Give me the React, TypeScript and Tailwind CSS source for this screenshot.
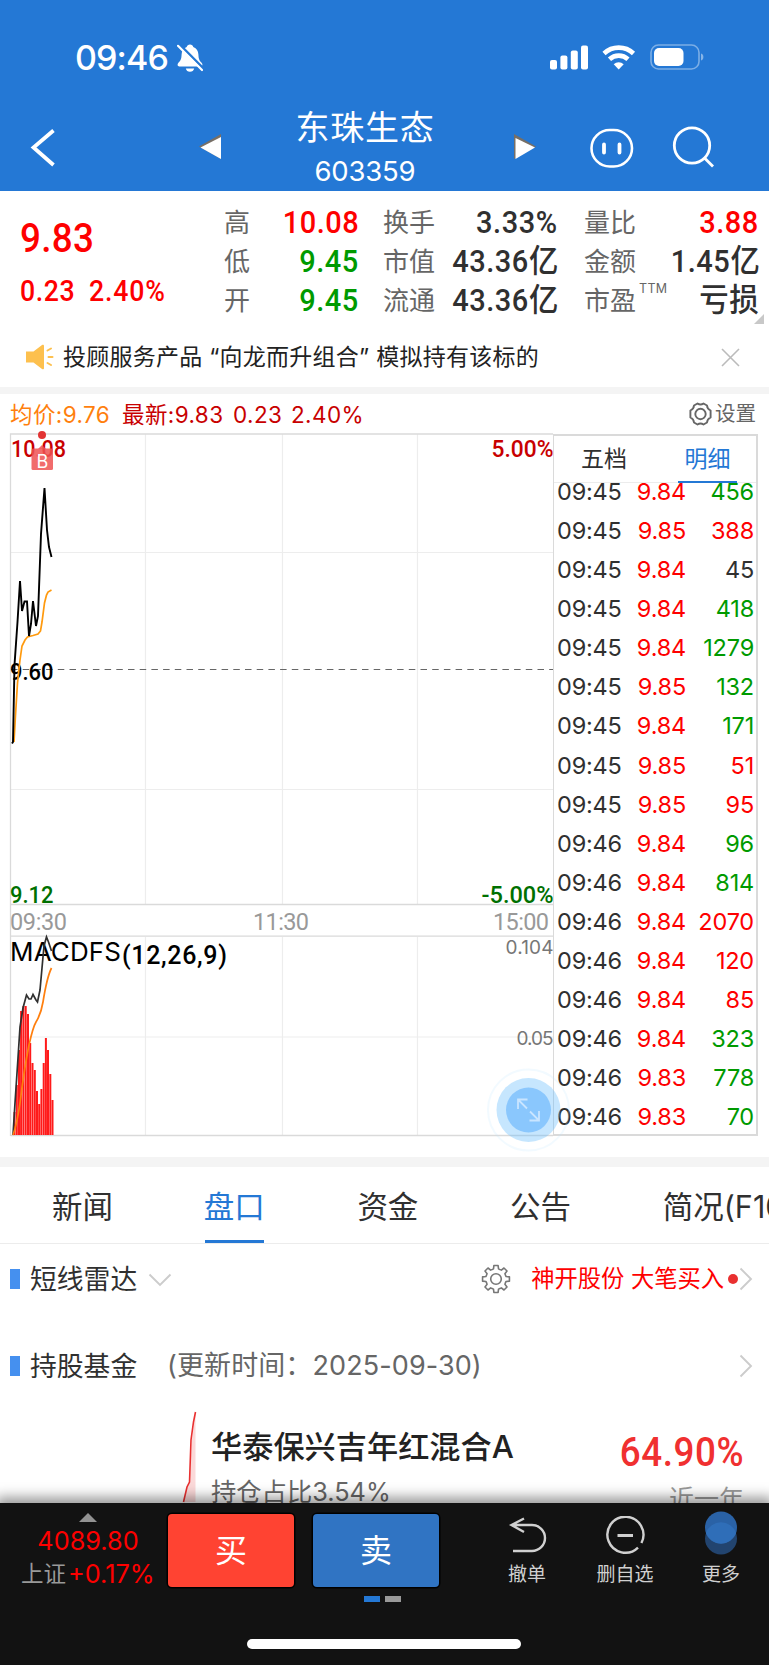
import React from 'react';

const RED = 'text-[#fe0000]';
const GREEN = 'text-[#009a00]';
const DARK = 'text-[#303030]';

function Digits({ children, className = '' }: { children: React.ReactNode; className?: string }) {
  return (
    <span className={`inline-block whitespace-nowrap font-['Roboto','Noto_Sans_CJK_SC',sans-serif] ${className}`}>{children}</span>
  );
}

function StatusBar() {
  return (
    <div className="flex h-[100px] items-start justify-between pt-[38px] pr-[65px] pl-[75px]">
      <div className="flex h-[40px] items-center">
        <span className="w-[102px] text-[34px] leading-[40px] font-medium tracking-[-0.900px]">09:46</span>
        <svg width="26" height="28" viewBox="0 0 26 28">
          <path
            d="M13 0.5c-1.7 0-3 1-3.300 2.500C6.300 4.200 4.800 7 4.600 10.500 4.400 15 3.600 16.600 1.400 18.800 0 20.300.4 22.500 2.200 22.500h21.600c1.800 0 2.200-2.200.8-3.700-2.200-2.200-3-3.800-3.200-8.300C21.200 7 19.700 4.200 16.300 3 16 1.500 14.700.5 13 .5z"
            fill="#fff"
          />
          <path d="M8.800 24.500h8.400c-.4 2-2 3.300-4.200 3.300s-3.800-1.300-4.200-3.300z" fill="#fff" />
          <path d="M2.500 0.500L27 25" stroke="#2478d5" strokeWidth="2.600" />
          <path d="M1 1.800L25 26" stroke="#fff" strokeWidth="2.200" strokeLinecap="round" />
        </svg>
      </div>
      <div className="flex h-[38px] items-center">
        <svg width="38" height="25" viewBox="0 0 38 25" fill="#fff">
          <rect x="0" y="15" width="7" height="9.500" rx="2" />
          <rect x="10.400" y="10.500" width="7" height="14" rx="2" />
          <rect x="20.800" y="5.500" width="7" height="19" rx="2" />
          <rect x="31" y="0.500" width="7" height="24" rx="2" />
        </svg>
        <svg className="ml-[14px]" width="34" height="25" viewBox="0 0 34 25" fill="none" stroke="#fff">
          <path d="M2 8.500a21.500 21.500 0 0 1 29.500 0" strokeWidth="4.600" />
          <path d="M7.500 14.300a13.500 13.500 0 0 1 18.500 0" strokeWidth="4.600" />
          <path d="M16.700 24.500l-5-5.200a7.400 7.400 0 0 1 10 0z" fill="#fff" stroke="none" />
        </svg>
        <svg className="ml-[14px]" width="54" height="26" viewBox="0 0 54 26">
          <rect x="1" y="1" width="48" height="24" rx="7.500" fill="none" stroke="#fff" strokeOpacity="0.400" strokeWidth="1.600" />
          <rect x="4" y="4" width="29.500" height="18" rx="5" fill="#fff" />
          <path d="M51 9.500c3.200.8 3.200 6.200 0 7z" fill="#fff" fillOpacity="0.450" />
        </svg>
      </div>
    </div>
  );
}

function NavBar() {
  return (
    <div className="flex h-[91px] items-start pl-[29px]">
      <svg className="mt-[27px]" width="28" height="42" viewBox="0 0 28 42" fill="none" stroke="#fff" strokeWidth="3.800">
        <path d="M24.500 3.500L4.500 20.500L24.500 38" />
      </svg>
      <svg className="mt-[33px] ml-[140px]" width="26" height="27" viewBox="0 0 26 27">
        <path d="M2 13.500L24 1v25z" fill="#776f66" />
        <path d="M3.500 14.500L24 4v22z" fill="#fff" />
      </svg>
      <div className="flex w-[284px] flex-col items-center">
        <div className="mt-[7px] h-[42px] text-[34px] leading-[42px] tracking-[0.700px]">东珠生态</div>
        <div className="mt-[7px] h-[30px] text-[27.500px] leading-[30px] tracking-[-0.200px]">603359</div>
      </div>
      <svg className="mt-[33px] ml-[5px]" width="26" height="27" viewBox="0 0 26 27">
        <path d="M2 1v25l22-12.500z" fill="#776f66" />
        <path d="M3.500 5v21l19.500-11.500z" fill="#fff" />
      </svg>
      <svg className="mt-[26px] ml-[50px]" width="46" height="44" viewBox="0 0 46 44" fill="none" stroke="#fff">
        <rect x="3.500" y="4" width="40.500" height="36.500" rx="18.250" strokeWidth="2.600" />
        <path d="M16 18.500v8M31.500 18.500v8" strokeWidth="3.800" strokeLinecap="round" />
      </svg>
      <svg className="mt-[25px] ml-[38px]" width="44" height="44" viewBox="0 0 44 44" fill="none" stroke="#fff" strokeWidth="2.800">
        <circle cx="20" cy="20.500" r="17.700" />
        <path d="M32 32.500l9 9" />
      </svg>
    </div>
  );
}

function StatColumn({
  rows,
  className,
}: {
  rows: { label: React.ReactNode; value: React.ReactNode; color: string }[];
  className: string;
}) {
  return (
    <div className={`flex flex-col ${className}`}>
      {rows.map((r, i) => (
        <div key={i} className="flex h-[39px] items-center justify-between">
          <span className="text-[26px] leading-[39px] whitespace-nowrap text-[#666]">{r.label}</span>
          <Digits className={`origin-right scale-x-[0.92] text-[31.500px] leading-[39px] font-medium tracking-[0.600px] ${r.color}`}>
            {r.value}
          </Digits>
        </div>
      ))}
    </div>
  );
}

function Quote() {
  const yi = (n: string) => (
    <>
      {n}
      <span className="text-[32px] tracking-[-0.500px]">亿</span>
    </>
  );
  return (
    <div className="flex h-[135px] pt-[12px]">
      <div className="flex w-[224px] flex-col pl-[20px]">
        <Digits
          className={`mt-[13px] h-[46px] origin-left scale-x-[0.92] text-[40px] leading-[46px] font-medium tracking-[0.300px] ${RED}`}
        >
          9.83
        </Digits>
        <div className={`mt-[12px] flex h-[34px] ${RED}`}>
          <Digits className="w-[69px] origin-left scale-x-[0.92] text-[29px] leading-[34px] font-medium tracking-[0.600px]">0.23</Digits>
          <Digits className="origin-left scale-x-[0.92] text-[29px] leading-[34px] font-medium tracking-[0.900px]">2.40%</Digits>
        </div>
      </div>
      <StatColumn
        className="w-[135px]"
        rows={[
          { label: '高', value: '10.08', color: RED },
          { label: '低', value: '9.45', color: GREEN },
          { label: '开', value: '9.45', color: GREEN },
        ]}
      />
      <StatColumn
        className="ml-[24px] w-[175px]"
        rows={[
          { label: '换手', value: '3.33%', color: DARK },
          { label: '市值', value: yi('43.36'), color: DARK },
          { label: '流通', value: yi('43.36'), color: DARK },
        ]}
      />
      <StatColumn
        className="ml-[26px] w-[175px]"
        rows={[
          { label: '量比', value: '3.88', color: RED },
          { label: '金额', value: yi('1.45'), color: DARK },
          {
            label: (
              <span className="flex">
                市盈<span className="-mt-[12px] ml-[3px] text-[12.500px] tracking-[0.300px]">TTM</span>
              </span>
            ),
            value: <span className="text-[32px]">亏损</span>,
            color: DARK,
          },
        ]}
      />
      <svg className="mt-[110px] -ml-[6px]" width="12" height="12" viewBox="0 0 12 12">
        <path d="M11 1v10H1z" fill="#c8c8c8" />
      </svg>
    </div>
  );
}

function Notice() {
  return (
    <div className="flex h-[61px] items-center pl-[25px]">
      <svg className="mt-[1px]" width="30" height="28" viewBox="0 0 30 28">
        <path d="M1 8.500h7.500L17 2c1-.7 2-.3 2 .8v22.400c0 1.100-1 1.500-2 .8l-8.500-6.500H1z" fill="#fdc04e" />
        <path d="M22.500 7.500l3.500-2M23.500 14h4M22.500 20l3.500 2" stroke="#fdc04e" strokeWidth="2" strokeLinecap="round" />
      </svg>
      <span className="mt-[1px] ml-[8px] w-[654px] text-[23px] leading-[36px] tracking-[0.250px] text-[#222]">
        投顾服务产品 “向龙而升组合” 模拟持有该标的
      </span>
      <svg className="mt-[1px] ml-[4px]" width="19" height="19" viewBox="0 0 19 19" stroke="#bbb" strokeWidth="1.600">
        <path d="M1 1l17 17M18 1L1 18" />
      </svg>
    </div>
  );
}

function Legend() {
  return (
    <div className="flex h-[39px] items-center pt-[2px] pl-[10px] text-[22.500px] leading-[37px] tracking-[0.400px] whitespace-nowrap text-[#c80000]">
      <span className="w-[112px] text-[#ff7f0e]">均价:9.76</span>
      <span className="w-[111px]">最新:9.83</span>
      <span className="w-[58px]">0.23</span>
      <span className="w-[397px]">2.40%</span>
      <svg className="-mt-[2px]" width="25" height="24" viewBox="0 0 25 24" fill="none" stroke="#666" strokeWidth="1.900">
        <path
          d="M9.500 1.500Q12.500 3.500 15.500 1.500L19 3.500Q19.200 7 22.600 8.500V15.500Q19.200 17 19 20.500L15.500 22.500Q12.500 20.500 9.500 22.500L6 20.500Q5.800 17 2.400 15.500V8.500Q5.800 7 6 3.500Z"
          strokeLinejoin="round"
        />
        <circle cx="12.500" cy="12" r="5.200" />
      </svg>
      <span className="-mt-[2px] ml-[2px] text-[20.500px] tracking-normal text-[#666]">设置</span>
    </div>
  );
}

const BARS: [number, number][] = [
  [13.500, 1112], [15.800, 1085], [18, 1050], [20.100, 1011], [22.400, 1006], [24.700, 1006], [27, 1014], [29.200, 1043],
  [31.500, 1063], [33.800, 1070], [36, 1091], [38.200, 1104], [40.400, 1089], [42.700, 1063], [44.900, 1038],
  [47, 1050], [49.300, 1074], [51.500, 1100],
];

function Charts() {
  return (
    <svg width="553" height="724" viewBox="0 433 553 724" className="shrink-0 overflow-visible">
      <g stroke="#ededed" strokeWidth="1.200" fill="none">
        <path d="M145.500 434V904M282.500 434V904M417.500 434V904M145.500 937V1136M282.500 937V1136M417.500 937V1136" />
        <path d="M11 552.500H553M11 789.500H553M11 1037H553" />
      </g>
      <g stroke="#dadada" strokeWidth="1.300" fill="none">
        <path d="M10.500 1136V434H553M10.500 904.500H553M10.500 936.200H553M10.500 1135.500H553" />
      </g>
      <path d="M11 669.500H553" stroke="#666" strokeWidth="1.200" strokeDasharray="6.500 5.200" fill="none" />

      <g fontFamily="Roboto, sans-serif" fontWeight="500" fontSize="23.500">
        <text x="11" y="456.500" fill="#c80000" textLength="55" lengthAdjust="spacingAndGlyphs">10.08</text>
        <text x="553.500" y="456.500" fill="#c80000" textAnchor="end" textLength="62" lengthAdjust="spacingAndGlyphs">5.00%</text>
        <text x="10" y="680" fill="#000" textLength="43.500" lengthAdjust="spacingAndGlyphs">9.60</text>
        <text x="10" y="903" fill="#007000" textLength="43.500" lengthAdjust="spacingAndGlyphs">9.12</text>
        <text x="553.500" y="903" fill="#007000" textAnchor="end" textLength="72" lengthAdjust="spacingAndGlyphs">-5.00%</text>
        <g fill="#999" fontWeight="400">
          <text x="10" y="930" textLength="57">09:30</text>
          <text x="253" y="930" textLength="56">11:30</text>
          <text x="493" y="930" textLength="56">15:00</text>
        </g>
        <text x="122" y="963.500" fontSize="25" textLength="105">(12,26,9)</text>
      </g>
      <g fontFamily="Inter, sans-serif">
        <text x="10" y="961" fontSize="26" fill="#000" textLength="111">MACDFS</text>
        <text x="553.500" y="954" fontSize="19" fill="#777" textAnchor="end" textLength="48">0.104</text>
        <text x="553.500" y="1045" fontSize="19" fill="#777" textAnchor="end" textLength="37">0.05</text>
      </g>

      <path
        d="M14 742L15.500 715L17.500 683L20 660L22 646L25 640L27.500 637L33 635.500L38 634L40.500 631L42 622L44.500 603L46.500 595L48 592L51.500 590"
        stroke="#ff9a0e" strokeWidth="1.700" fill="none"
      />
      <path
        d="M12 743.500L13 742L14.500 665L17.500 622L20 581L22 611L24.500 601.500H27L29 636L31 624L33 601L36 626L38 616L41 534L44.500 488L47 530L49 547L51.500 557"
        stroke="#000" strokeWidth="1.900" fill="none"
      />

      <rect x="31.500" y="448.500" width="21.500" height="21.500" rx="1.500" fill="#ee5252" fillOpacity="0.850" />
      <path d="M38 449l4-4 4 4z" fill="#ee5252" fillOpacity="0.850" />
      <text x="42.300" y="467.500" fill="#fff" fontSize="18" fontFamily="Inter, sans-serif" textAnchor="middle">B</text>
      <circle cx="42" cy="435" r="4" fill="#e23434" />

      {BARS.map(([x, y]) => (
        <rect key={x} x={x} y={y} width="2" height={1135 - y} fill="#ff1a1a" />
      ))}
      <path
        d="M13 1135L15 1103L18 1058L20 1027L23 1008L26.500 995L29 999L31 999L33 994.500L36 1000L37.500 1002L40 990L42 968L44 946L46.500 937L48.500 942L51.500 951"
        stroke="#303030" strokeWidth="1.700" fill="none"
      />
      <path
        d="M13 1135Q17 1124 20 1103Q24 1070 29 1045Q33 1027 36 1022Q41 1014 43 1002Q47 977 51.500 968"
        stroke="#ff7f0e" strokeWidth="1.700" fill="none"
      />
    </svg>
  );
}

const TRADES: [string, string, string, string][] = [
  ['09:45', '9.84', '456', GREEN],
  ['09:45', '9.85', '388', RED],
  ['09:45', '9.84', '45', DARK],
  ['09:45', '9.84', '418', GREEN],
  ['09:45', '9.84', '1279', GREEN],
  ['09:45', '9.85', '132', GREEN],
  ['09:45', '9.84', '171', GREEN],
  ['09:45', '9.85', '51', RED],
  ['09:45', '9.85', '95', RED],
  ['09:46', '9.84', '96', GREEN],
  ['09:46', '9.84', '814', GREEN],
  ['09:46', '9.84', '2070', RED],
  ['09:46', '9.84', '120', RED],
  ['09:46', '9.84', '85', RED],
  ['09:46', '9.84', '323', GREEN],
  ['09:46', '9.83', '778', GREEN],
  ['09:46', '9.83', '70', GREEN],
];

function TradePanel() {
  return (
    <div className="mt-[1px] flex h-[702px] w-[205px] shrink-0 flex-col border-t-2 border-r-2 border-b-2 border-l border-[#dadada]">
      <div className="flex h-[47px] border-b border-[#ececec]">
        <span className="w-[124px] pl-[27px] text-[23px] leading-[47px] text-[#303030]">五档</span>
        <span className="-mb-px flex w-[59px] justify-center border-b-2 border-[#2478d5] text-[23px] leading-[47px] text-[#2478d5]">
          明细
        </span>
      </div>
      <div className="flex flex-1 flex-col overflow-hidden text-[23.500px] leading-[39px] tracking-[-0.200px]">
        {TRADES.map(([time, price, volume, color], i) => (
          <div key={i} className={`flex h-[39.080px] shrink-0 pr-[2px] pl-[3px] ${i === 0 ? '-mt-[11px]' : ''}`}>
            <span className="w-[64px] text-[#303030]">{time}</span>
            <span className={`w-[65px] text-right ${RED}`}>{price}</span>
            <span className={`flex-1 text-right ${color}`}>{volume}</span>
          </div>
        ))}
      </div>
    </div>
  );
}

function Market() {
  return (
    <div className="relative flex h-[724px]">
      <Charts />
      <TradePanel />
      <svg className="absolute top-[635px] left-[486px]" width="84" height="84" viewBox="0 0 84 84">
        <circle cx="42.500" cy="42" r="40.500" fill="none" stroke="#bfe4ff" strokeOpacity="0.200" strokeWidth="2" />
        <circle cx="42.500" cy="42" r="32" fill="#5cb6fb" fillOpacity="0.350" />
        <circle cx="42.500" cy="42" r="22.500" fill="#7fc1fd" fillOpacity="0.850" />
        <g stroke="#c9e5ff" strokeWidth="1.800" fill="none">
          <path d="M32 41V31.500H41.500M32 31.500L41 40.500M53 43V52.500H43.500M53 52.500L44 43.500" />
        </g>
      </svg>
    </div>
  );
}

function Tabs() {
  const tabs = ['新闻', '盘口', '资金', '公告', '简况(F10)'];
  return (
    <div className="flex h-[77px] overflow-hidden border-b border-[#ececec] pl-[52px] text-[30.500px] leading-[79px] whitespace-nowrap text-[#303030]">
      {tabs.map((t, i) => (
        <div key={t} className="w-[152.700px] shrink-0">
          {i === 1 ? (
            <span className="flex h-[77px] w-[59px] justify-center border-b-4 border-[#2478d5] text-[#2478d5]">{t}</span>
          ) : (
            t
          )}
        </div>
      ))}
    </div>
  );
}

function ChevronRight() {
  return (
    <svg width="14" height="24" viewBox="0 0 14 24" fill="none" stroke="#ccc" strokeWidth="1.900">
      <path d="M1.500 1.500L12 12L1.500 22.500" />
    </svg>
  );
}

const GEAR = Array.from({ length: 8 }, (_, i) => {
  const at = (deg: number, r: number) => {
    const a = ((i * 45 + deg) * Math.PI) / 180;
    return `${(15 + r * Math.sin(a)).toFixed(2)} ${(15 - r * Math.cos(a)).toFixed(2)}`;
  };
  return `${i === 0 ? 'M' : 'L'}${at(-14, 10.4)}L${at(-9, 13.6)}L${at(9, 13.6)}L${at(14, 10.4)}A10.4 10.4 0 0 0 ${at(31, 10.4)}`;
}).join('');

function RadarRow() {
  return (
    <div className="flex h-[70px] items-center pl-[10px]">
      <span className="h-[20px] w-[10px] bg-[#4590ef]" />
      <span className="ml-[10px] text-[26.800px] leading-[40px] text-[#303030]">短线雷达</span>
      <svg className="mt-[1px] ml-[11px]" width="24" height="14" viewBox="0 0 24 14" fill="none" stroke="#ccc" strokeWidth="1.900">
        <path d="M1.500 1.500L12 12L22.500 1.500" />
      </svg>
      <svg className="ml-[309px]" width="30" height="30" viewBox="0 0 30 30" fill="none" stroke="#777" strokeWidth="1.600">
        <path d={GEAR + 'Z'} strokeLinejoin="round" />
        <circle cx="15" cy="15" r="5.300" />
      </svg>
      <span className="ml-[20px] w-[197px] text-[23.300px] leading-[40px] whitespace-nowrap text-[#fe0000]">神开股份 大笔买入</span>
      <span className="h-[10px] w-[10px] rounded-full bg-[#e93030]" />
      <span className="ml-[1px]">
        <ChevronRight />
      </span>
    </div>
  );
}

function FundRow() {
  return (
    <div className="flex h-[95px] items-center pt-[9px] pl-[10px]">
      <span className="h-[20px] w-[10px] bg-[#4590ef]" />
      <span className="ml-[10px] w-[137px] text-[26.800px] leading-[40px] text-[#303030]">持股基金</span>
      <span className="w-[572px] text-[27px] leading-[40px] tracking-[0.100px] text-[#666]">(更新时间：2025-09-30)</span>
      <ChevronRight />
    </div>
  );
}

function FundItem() {
  return (
    <div className="flex h-[94px] overflow-hidden pl-[180px]">
      <svg width="20" height="94" viewBox="0 1409 20 94" className="shrink-0">
        <path d="M15.500 1412L12 1440L9.500 1482L7 1486L3.500 1502H15.500z" fill="#fbd9d9" />
        <path d="M15.500 1412L13.500 1422L11 1440L9.500 1482L7 1487L3.500 1502" stroke="#e93030" strokeWidth="1.600" fill="none" />
      </svg>
      <div className="ml-[11px] flex w-[391px] flex-col whitespace-nowrap">
        <span className="mt-[18px] text-[31.200px] leading-[40px] font-medium text-[#222]">华泰保兴吉年红混合A</span>
        <span className="mt-[7px] text-[25.300px] leading-[36px] text-[#666]">持仓占比3.54%</span>
      </div>
      <div className="flex w-[142px] flex-col items-end whitespace-nowrap">
        <Digits className="mt-[24px] origin-right scale-x-[0.92] text-[40px] leading-[40px] font-medium tracking-[0.600px] text-[#f03030]">
          64.90%
        </Digits>
        <span className="mt-[8px] text-[25px] leading-[36px] text-[#999]">近一年</span>
      </div>
    </div>
  );
}

function ToolLabel({ children }: { children: React.ReactNode }) {
  return <span className="mt-[7px] text-[19px] leading-[24px] whitespace-nowrap text-[#d0d0d0]">{children}</span>;
}

function BottomBar() {
  return (
    <div className="relative flex h-[162px] flex-col bg-[#121212] shadow-[0_-2px_12px_4px_rgba(0,0,0,0.4)]">
      <div className="flex h-[91px] shrink-0">
        <div className="flex w-[168px] flex-col text-[#fe0000]">
          <div className="flex flex-col items-center pl-[8px]">
            <svg className="mt-[10px]" width="18" height="9" viewBox="0 0 18 9">
              <path d="M9 0l9 9H0z" fill="#929292" />
            </svg>
            <span className="mt-[4px] text-[25.300px] leading-[30px]">4089.80</span>
          </div>
          <div className="mt-[2px] flex pl-[21px] leading-[32px] whitespace-nowrap">
            <span className="w-[47px] text-[22.500px] text-[#999]">上证</span>
            <span className="text-[25.300px]">+0.17%</span>
          </div>
        </div>
        <button className="mt-[11px] h-[73px] w-[126px] rounded-[4px] bg-[#ff4332] text-[32px] leading-[73px] text-white shadow-[0_0_0_1.500px_#000]">
          买
        </button>
        <button className="mt-[11px] ml-[19px] h-[73px] w-[126px] rounded-[4px] bg-[#3074c3] text-[32px] leading-[73px] text-white shadow-[0_0_0_1.500px_#000]">
          卖
        </button>
        <div className="ml-[47px] flex w-[82px] flex-col items-center">
          <svg className="mt-[13px]" width="40" height="40" viewBox="0 0 40 40" fill="none" stroke="#d0d0d0" strokeWidth="2.400">
            <path d="M5 9H25A13 13 0 0 1 25 35H6M17 2.500L4.500 9L17 16" />
          </svg>
          <ToolLabel>撤单</ToolLabel>
        </div>
        <div className="ml-[16px] flex w-[82px] flex-col items-center">
          <svg className="mt-[13px]" width="40" height="40" viewBox="0 0 40 40" fill="none" stroke="#d0d0d0" strokeWidth="2.400">
            <path d="M36.400 27A18 18 0 1 0 33 31.600" />
            <path d="M12.500 19.500h15.500" strokeWidth="3" />
          </svg>
          <ToolLabel>删自选</ToolLabel>
        </div>
        <div className="ml-[14px] flex w-[82px] flex-col items-center">
          <svg className="mt-[8px]" width="32" height="45" viewBox="0 0 32 45">
            <circle cx="16" cy="27.500" r="16" fill="#22446f" />
            <circle cx="16" cy="16.500" r="16" fill="#2a62a6" />
            <path d="M0.900 22A16 16 0 0 1 31.100 22A16 16 0 0 1 0.900 22z" fill="#2f6eb8" />
          </svg>
          <ToolLabel>更多</ToolLabel>
        </div>
      </div>
      <div className="mt-[2px] flex h-[6px] gap-[5px] pl-[364px]">
        <span className="w-[16px] bg-[#2478d5]" />
        <span className="w-[16px] bg-[#999]" />
      </div>
      <div className="mt-[37px] ml-[247px] h-[10px] w-[274px] rounded-full bg-white" />
    </div>
  );
}

export default function App() {
  return (
    <div className="flex h-[1665px] w-[769px] flex-col overflow-hidden bg-white font-['Inter','Noto_Sans_CJK_SC',sans-serif]">
      <header className="h-[191px] bg-[#2478d5] text-white">
        <StatusBar />
        <NavBar />
      </header>
      <Quote />
      <Notice />
      <div className="h-[7px] bg-[#f4f4f4]" />
      <Legend />
      <Market />
      <div className="h-[10px] bg-[#f4f4f4]" />
      <Tabs />
      <RadarRow />
      <FundRow />
      <FundItem />
      <BottomBar />
    </div>
  );
}
